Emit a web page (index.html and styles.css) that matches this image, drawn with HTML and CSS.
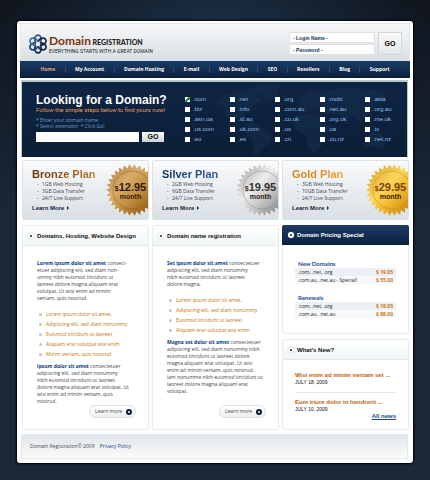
FILE: index.html
```html
<!DOCTYPE html>
<html lang="en">
<head>
<meta charset="utf-8">
<title>Domain Registration</title>
<link rel="stylesheet" href="styles.css">
</head>
<body>
<div class="page">
  <header class="header">
    <a class="brand" href="#">
      <svg class="brand-mark" viewBox="0 0 40 40" aria-hidden="true">
        <g fill="none" stroke-width="3.6">
          <ellipse cx="20" cy="10.5" rx="6.4" ry="8.2" stroke="#2a5488"/>
          <ellipse cx="20" cy="10.5" rx="6.4" ry="8.2" stroke="#12284c" transform="rotate(60 20 20)"/>
          <ellipse cx="20" cy="10.5" rx="6.4" ry="8.2" stroke="#12284c" transform="rotate(120 20 20)"/>
          <ellipse cx="20" cy="10.5" rx="6.4" ry="8.2" stroke="#12284c" transform="rotate(180 20 20)"/>
          <ellipse cx="20" cy="10.5" rx="6.4" ry="8.2" stroke="#1c4478" transform="rotate(240 20 20)"/>
          <ellipse cx="20" cy="10.5" rx="6.4" ry="8.2" stroke="#3c6ca4" transform="rotate(300 20 20)"/>
        </g>
        <circle cx="20" cy="20" r="4.5" fill="#edf0f2"/>
      </svg>
      <span class="brand-text">
        <span class="brand-name"><b>Domain</b> <span>REGISTRATION</span></span>
        <span class="brand-tag">EVERYTHING STARTS WITH A GREAT DOMAIN</span>
      </span>
    </a>
    <form class="login">
      <div class="login-fields">
        <input type="text" aria-label="Login name" value="- Login Name -">
        <input type="text" aria-label="Password" value="- Password -">
      </div>
      <button class="login-go" type="button">GO</button>
    </form>
  </header>

  <nav class="nav">
    <ul>
      <li><a class="active" href="#">Home</a></li>
      <li><a href="#">My Account</a></li>
      <li><a href="#">Domain Hosting</a></li>
      <li><a href="#">E-mail</a></li>
      <li><a href="#">Web Design</a></li>
      <li><a href="#">SEO</a></li>
      <li><a href="#">Resellers</a></li>
      <li><a href="#">Blog</a></li>
      <li><a href="#">Support</a></li>
    </ul>
  </nav>

  <form class="hero">
    <svg class="hero-map" viewBox="0 0 190 72" aria-hidden="true">
      <path d="M2 16l8-6 14-3 12-4 8 2-2 6 6 5-8 3-6 6-5 5 1 6-6-3-6 1 4 6-6-2-6-9-2-7-8 2z"/>
      <path d="M40 3l14-3 12 2-3 8-9 7-6-5z"/>
      <path d="M30 40l10-1 9 6 9 5-3 9-8 8-4 5h-4l-1-14-7-8z"/>
      <path d="M86 16l6-6 9-5 8 3 12-3 18-2 22 2 16 6-4 6-8 2-4 8-8 6-4 7-6-7-5 1-3 7-6-9-10-3-8 1-8-4-10 2-8 1 2-7z"/>
      <path d="M84 31l12-2 12 3 6 9 5 2-7 9-3 11-7 6-6-3-3-14-10-6-4-8z"/>
      <path d="M152 54l9-5 9 1 6 9-5 7-9-3-9 1z"/>
    </svg>
    <div class="search">
      <h1>Looking for a Domain?</h1>
      <p class="lead">Follow the simple steps below to find yours now!</p>
      <p class="steps">* Enter your domain name<br>* Select extension &nbsp;* Click Go!</p>
      <div class="search-row">
        <input type="text" aria-label="Domain name">
        <button type="button">GO</button>
      </div>
    </div>
    <div class="extensions">
      <label><input type="checkbox" checked>.com</label>
      <label><input type="checkbox">.net</label>
      <label><input type="checkbox">.org</label>
      <label><input type="checkbox">.mobi</label>
      <label><input type="checkbox">.asia</label>
      <label><input type="checkbox">.biz</label>
      <label><input type="checkbox">.info</label>
      <label><input type="checkbox">.com.au</label>
      <label><input type="checkbox">.net.au</label>
      <label><input type="checkbox">.org.au</label>
      <label><input type="checkbox">.asn.ua</label>
      <label><input type="checkbox">.id.au</label>
      <label><input type="checkbox">.co.uk</label>
      <label><input type="checkbox">.org.uk</label>
      <label><input type="checkbox">.me.uk</label>
      <label><input type="checkbox">.us.com</label>
      <label><input type="checkbox">.uk.com</label>
      <label><input type="checkbox">.us</label>
      <label><input type="checkbox">.ca</label>
      <label><input type="checkbox">.tv</label>
      <label><input type="checkbox">.eu</label>
      <label><input type="checkbox">.es</label>
      <label><input type="checkbox">.cn</label>
      <label><input type="checkbox">.co.nz</label>
      <label><input type="checkbox">.net.nz</label>
    </div>
  </form>

  <main class="content">
    <section class="plan bronze">
      <h2>Bronze Plan</h2>
      <ul><li>1GB Web Hosting</li><li>3GB Data Transfer</li><li>24/7 Live Support</li></ul>
      <a class="plan-more" href="#">Learn More</a>
      <div class="seal">
        <svg viewBox="-27 -27 54 54" aria-hidden="true">
          <defs><linearGradient id="bronze" x1="0" y1="0" x2="1" y2="1"><stop offset="0" stop-color="#a8763a"/><stop offset=".35" stop-color="#d8ae68"/><stop offset=".6" stop-color="#c08a3c"/><stop offset="1" stop-color="#7c4508"/></linearGradient></defs>
          <polygon class="seal-star" fill="url(#bronze)"/>
          <circle r="19" fill="none" stroke="#8f5c20" stroke-opacity=".5"/>
        </svg>
        <p class="price"><small>$</small>12.95</p><p class="per">month</p>
      </div>
    </section>
    <section class="plan silver">
      <h2>Silver Plan</h2>
      <ul><li>2GB Web Hosting</li><li>6GB Data Transfer</li><li>24/7 Live Support</li></ul>
      <a class="plan-more" href="#">Learn More</a>
      <div class="seal">
        <svg viewBox="-27 -27 54 54" aria-hidden="true">
          <defs><linearGradient id="silver" x1="0" y1="0" x2="1" y2="1"><stop offset="0" stop-color="#9c9c9c"/><stop offset=".4" stop-color="#ececec"/><stop offset=".6" stop-color="#c6c6c6"/><stop offset="1" stop-color="#707070"/></linearGradient></defs>
          <polygon class="seal-star" fill="url(#silver)"/>
          <circle r="19" fill="none" stroke="#888" stroke-opacity=".5"/>
        </svg>
        <p class="price"><small>$</small>19.95</p><p class="per">month</p>
      </div>
    </section>
    <section class="plan gold">
      <h2>Gold Plan</h2>
      <ul><li>3GB Web Hosting</li><li>10GB Data Transfer</li><li>24/7 Live Support</li></ul>
      <a class="plan-more" href="#">Learn More</a>
      <div class="seal">
        <svg viewBox="-27 -27 54 54" aria-hidden="true">
          <defs><linearGradient id="gold" x1="0" y1="0" x2="1" y2="1"><stop offset="0" stop-color="#d49a20"/><stop offset=".4" stop-color="#fcd65c"/><stop offset=".6" stop-color="#f0b82c"/><stop offset="1" stop-color="#b87000"/></linearGradient></defs>
          <polygon class="seal-star" fill="url(#gold)"/>
          <circle r="19" fill="none" stroke="#c08818" stroke-opacity=".5"/>
        </svg>
        <p class="price"><small>$</small>29.95</p><p class="per">month</p>
      </div>
    </section>

    <article class="panel">
      <h3><i class="dot"></i>Domains, Hosting, Website Design</h3>
      <div class="copy">
        <p><b>Lorem ipsum dolor sit amet</b> consect-<br>etuer adipiscing elit, sed diam non-<br>ummy nibh euismod tincidunt ut<br>laoreet dolore magna aliquam erat<br>volutpat. Ut wisi enim ad minim<br>veniam, quis nostrud.</p>
        <ul><li>Lorem ipsum dolor sit amet,</li><li>Adipiscing elit, sed diam nonummy</li><li>Euismod tincidunt ut laoreet</li><li>Aliquam erat volutpat wisi enim</li><li>Minim veniam, quis nostrud</li></ul>
        <p><b>Ipsum dolor sit amet</b> consectetuer<br>adipiscing elit, sed diam nonummy<br>nibh euismod tincidunt ut laoreet<br>dolore magna aliquam erat volutpat. Ut<br>wisi enim ad minim veniam, quis<br>nostrud.</p>
      </div>
      <a class="more" href="#">Learn more<i class="more-dot"></i></a>
    </article>

    <article class="panel">
      <h3><i class="dot"></i>Domain name registration</h3>
      <div class="copy">
        <p><b>Set ipsum dolor sit amet</b> consectetuer<br>adipiscing elit, sed diam nonummy<br>nibh euismod tincidunt ut laoreet<br>dolore magna.</p>
        <ul><li>Lorem ipsum dolor sit amet,</li><li>Adipiscing elit, sed diam nonummy</li><li>Euismod tincidunt ut laoreet</li><li>Aliquam erat volutpat wisi enim</li></ul>
        <p><b>Magna set dolor sit amet</b> consectetuer<br>adipiscing elit, sed diam nonummy nibh<br>euismod tincidunt ut laoreet dolore<br>magna aliquam erat volutpat. Ut wisi<br>enim ad minim veniam, quis nostrud,<br>iam nonumme nibh euismod tincidunt ut<br>laoreet dolore magna aliquam erat<br>volutpat.</p>
      </div>
      <a class="more" href="#">Learn more<i class="more-dot"></i></a>
    </article>

    <div class="side">
      <section class="panel dark">
        <h3><i class="dot"></i>Domain Pricing Special</h3>
        <div class="prices">
          <table>
            <caption>New Domains</caption>
            <tr><td>.com, .net, .org</td><td>$ 19.95</td></tr>
            <tr><td>.com.au, .net.au - Special!</td><td>$ 55.00</td></tr>
          </table>
          <table>
            <caption>Renewals</caption>
            <tr><td>.com, .net, .org</td><td>$ 19.95</td></tr>
            <tr><td>.com.au, .net.au</td><td>$ 88.00</td></tr>
          </table>
        </div>
      </section>
      <section class="panel news">
        <h3><i class="dot"></i>What's New?</h3>
        <div class="news-list">
          <p><a href="#">Wisi enim ad minim veniam set ...</a><br>JULY 18, 2009</p>
          <p><a href="#">Eum iriure dolor in hendrerit ...</a><br>JULY 10, 2009</p>
          <a class="all" href="#">All news</a>
        </div>
      </section>
    </div>
  </main>

  <footer class="footer">Domain Registration© 2009 <a href="#">Privacy Policy</a></footer>
</div>
<script src="seals.js"></script>
</body>
</html>
```
FILE: styles.css
```css
* { box-sizing: border-box; }
html { background: #1a2839; }
body {
  margin: 0;
  padding: 21px 17px 17px;
  font: 5px/7px "Open Sans", "Liberation Sans", sans-serif;
  color: #484848;
  background: radial-gradient(ellipse 50% 90px at 50% 30px, #1c3048, rgba(20, 34, 50, 0) 100%), linear-gradient(#10151e, #1a2839 220px);
}
h1, h2, h3, p, ul { margin: 0; padding: 0; }
h1, h2, h3, .plan-more, .login, .search-row, .extensions, .seal, .news-list { font-family: "Liberation Sans", Arial, sans-serif; }
ul { list-style: none; }
a { color: inherit; text-decoration: none; }
input, button { font: inherit; margin: 0; padding: 0; border: 0; border-radius: 0; }

.page {
  padding: 2px 3px 4px;
  background: #fff;
  border-radius: 3px;
  box-shadow: 0 0 2px 1px #000;
}

.header {
  display: flex;
  justify-content: space-between;
  padding: 8px 7px 6px;
  border: 1px solid #e4e8ea;
  border-bottom: 0;
  background: linear-gradient(#f7f8f9, #d9dfe3);
}
.brand { display: flex; align-items: center; gap: 1px; }
.brand-mark { width: 20px; height: 20px; }
.brand-text { display: flex; flex-direction: column; }
.brand-name { font: 900 7px/13px Lato, sans-serif; color: #222; }
.brand-name b { font-size: 12px; font-weight: 700; color: #7a3410; }
.brand-tag { font-family: Roboto, sans-serif; line-height: 5px; color: #222; }
.login { display: flex; gap: 3px; }
.login-fields { display: flex; flex-direction: column; gap: 1px; }
.login input {
  width: 86px;
  height: 11px;
  padding: 0 3px;
  border: 1px solid #dde1e4;
  background: #fff;
  font-weight: bold;
  color: #17335c;
}
.login-go {
  width: 24px;
  height: 23px;
  border: 1px solid #d3d7da;
  background: linear-gradient(#fafafa, #e3e6e9);
  font-size: 7px;
  font-weight: bold;
  color: #000;
}

.nav { background: linear-gradient(#1a3b64, #0c2340); border-bottom: 1px solid #0a1a30; }
.nav ul { display: flex; justify-content: space-between; padding: 5px 11px 4px; }
.nav li { flex: auto; text-align: center; font-weight: bold; color: #fff; }
.nav li + li { border-left: 1px solid #2c4a70; }
.nav .active { color: #e8a270; }

.hero {
  position: relative;
  display: flex;
  justify-content: space-between;
  margin: 2px 2px 3px 1px;
  padding: 12px 0 13px 14px;
  border: 1px solid #bcc4cc;
  border-width: 2px 1px 0;
  background: linear-gradient(#0e2543, #0c1f38);
}
.hero-map { position: absolute; right: 4px; top: 3px; width: 190px; height: 70px; fill: #1a3452; opacity: .4; }
.search { position: relative; }
.search h1 { font-size: 12px; line-height: 12px; color: #fff; }
.lead { margin-bottom: 3px; font: 6px/8px Roboto, sans-serif; color: #e89860; }
.steps { margin-bottom: 3px; line-height: 6px; color: #6f9ccc; }
.search-row { display: flex; gap: 3px; }
.search-row input { width: 103px; height: 10px; background: #fff; }
.search-row button { width: 22px; height: 10px; background: linear-gradient(#fff, #ccd0d6); font-size: 7px; line-height: 10px; font-weight: bold; color: #000; }
.extensions { position: relative; display: grid; grid-template-columns: repeat(4, 45px) 42px; grid-auto-rows: 10px; }
.extensions label { display: flex; align-items: center; gap: 3px; font-size: 6px; color: #8fbbe8; }
.extensions input { appearance: none; width: 5px; height: 5px; background: #fff; }
.extensions input:checked { background: linear-gradient(135deg, #fff 30%, #2a9a3a 30% 70%, #fff 70%); }

.content {
  display: grid;
  grid-template-columns: repeat(3, minmax(0, 1fr));
  gap: 5px 3px;
  margin: 0 1px 4px 2px;
}
.plan {
  position: relative;
  overflow: hidden;
  padding: 7px 10px 7px 9px;
  border: 1px solid #dde2e6;
  border-radius: 2px;
  background: linear-gradient(#f9fafb, #d9e0e4);
}
.plan h2 {
  width: max-content;
  font-size: 11px;
  line-height: 13px;
  color: transparent;
  background-clip: text;
}
.bronze h2 { background-image: linear-gradient(90deg, #6f2f08, #c07828); }
.silver h2 { background-image: linear-gradient(90deg, #10305c, #2f5fa0); }
.gold h2 { background-image: linear-gradient(90deg, #cc7c10, #f0a030); }
.plan ul { margin-bottom: 3px; padding-left: 5px; }
.plan li::before { content: "·"; display: inline-block; width: 5px; font-weight: bold; }
.plan-more { display: block; font-size: 6px; font-weight: bold; color: #14263f; }
.plan-more::after {
  content: "";
  display: inline-block;
  margin-left: 3px;
  border: 2px solid transparent;
  border-left-color: #14263f;
  border-right-width: 0;
}
.seal { position: absolute; right: -11px; top: 2px; width: 54px; height: 54px; padding: 19px 3px 0 0; text-align: center; }
.seal svg { position: absolute; inset: 0; }
.seal p { position: relative; font-weight: bold; color: #2e1c10; }
.seal .price { font-size: 11px; line-height: 11px; }
.price small { font-size: 7px; }
.seal .per { font-size: 7px; line-height: 6px; }
.silver .price { color: #333; }
.gold .price { color: #7a4008; }

.panel {
  display: flex;
  flex-direction: column;
  border: 1px solid #e8ebee;
  border-radius: 2px;
  background: #fff;
}
.panel h3 {
  display: flex;
  align-items: center;
  gap: 3px;
  height: 20px;
  padding-left: 5px;
  border-bottom: 1px solid #dfe7ea;
  background: linear-gradient(#fff, #f0f5f6);
  font-size: 6px;
  line-height: 8px;
  color: #111;
}
.dot { display: grid; place-items: center; width: 6px; height: 6px; border-radius: 50%; background: #fff; box-shadow: 0 0 1px #8aa; }
.dot::after { content: ""; width: 2px; height: 2px; border-radius: 50%; background: #123; }
.dark h3 { margin: -1px -1px 0; padding-left: 6px; border-bottom-color: #0b2142; border-radius: 2px 2px 0 0; background: linear-gradient(#1c3c66, #0b2142); color: #fff; }
.copy { padding: 14px 10px 0 14px; white-space: nowrap; }
.copy b { color: #0c3c84; }
.copy ul { margin: 7px 0 4px; color: #c87404; }
.copy li { display: flex; align-items: center; gap: 4px; padding-left: 2px; line-height: 10px; }
.copy li::before { content: ""; width: 3px; height: 3px; border-radius: 50%; background: #c4c4c4; }
.more {
  display: flex;
  align-items: center;
  align-self: flex-end;
  gap: 4px;
  margin: auto 12px 11px 0;
  padding: 2px 3px 2px 5px;
  border: 1px solid #dcdfe1;
  border-radius: 6px;
  background: linear-gradient(#fff, #eceeef);
}
.more-dot { width: 6px; height: 6px; border: 2px solid #0c1d36; border-radius: 50%; background: #fff; }

.side { display: flex; flex-direction: column; gap: 5px; }
.prices { display: flex; flex-direction: column; gap: 10px; padding: 15px 12px; }
.prices table { width: 100%; border-collapse: collapse; font-size: 5px; line-height: 8px; color: #222; }
.prices caption { padding: 0 3px 1px; text-align: left; font-size: 6px; line-height: 7px; font-family: Lato, sans-serif; color: #1c4c90; font-weight: bold; }
.prices td { padding: 0 3px; background: #f7f8fa; }
.prices tr:first-child td { background: #eceff3; }
.prices td + td { text-align: right; font-weight: bold; color: #d0780c; }
.news { flex: auto; }
.news-list { display: flex; flex-direction: column; padding: 12px 12px 0; color: #111; white-space: nowrap; }
.news-list p { padding-bottom: 6px; }
.news-list p a { font-size: 6px; font-weight: bold; color: #c4620c; }
.news-list p + p { padding: 6px 0 0; border-top: 1px solid #e4e8ec; }
.news-list .all { align-self: flex-end; font-size: 6px; font-weight: bold; color: #1c4c90; text-decoration: underline; }

.footer {
  margin: 0 2px 0 1px;
  padding: 8px;
  border: 1px solid #e4e8eb;
  background: linear-gradient(#e0e5e9, #fafbfb);
}
.footer a { margin-left: 4px; color: #124a8c; }
```
FILE: seals.js
```js
// Outline of the saw-toothed price seals.
const teeth = 30;
const points = [];
for (let i = 0; i < teeth * 2; i++) {
  const radius = i % 2 ? 22 : 26;
  const angle = Math.PI * i / teeth;
  points.push((radius * Math.cos(angle)).toFixed(2) + "," + (radius * Math.sin(angle)).toFixed(2));
}
document.querySelectorAll(".seal-star").forEach(star => star.setAttribute("points", points.join(" ")));
```
